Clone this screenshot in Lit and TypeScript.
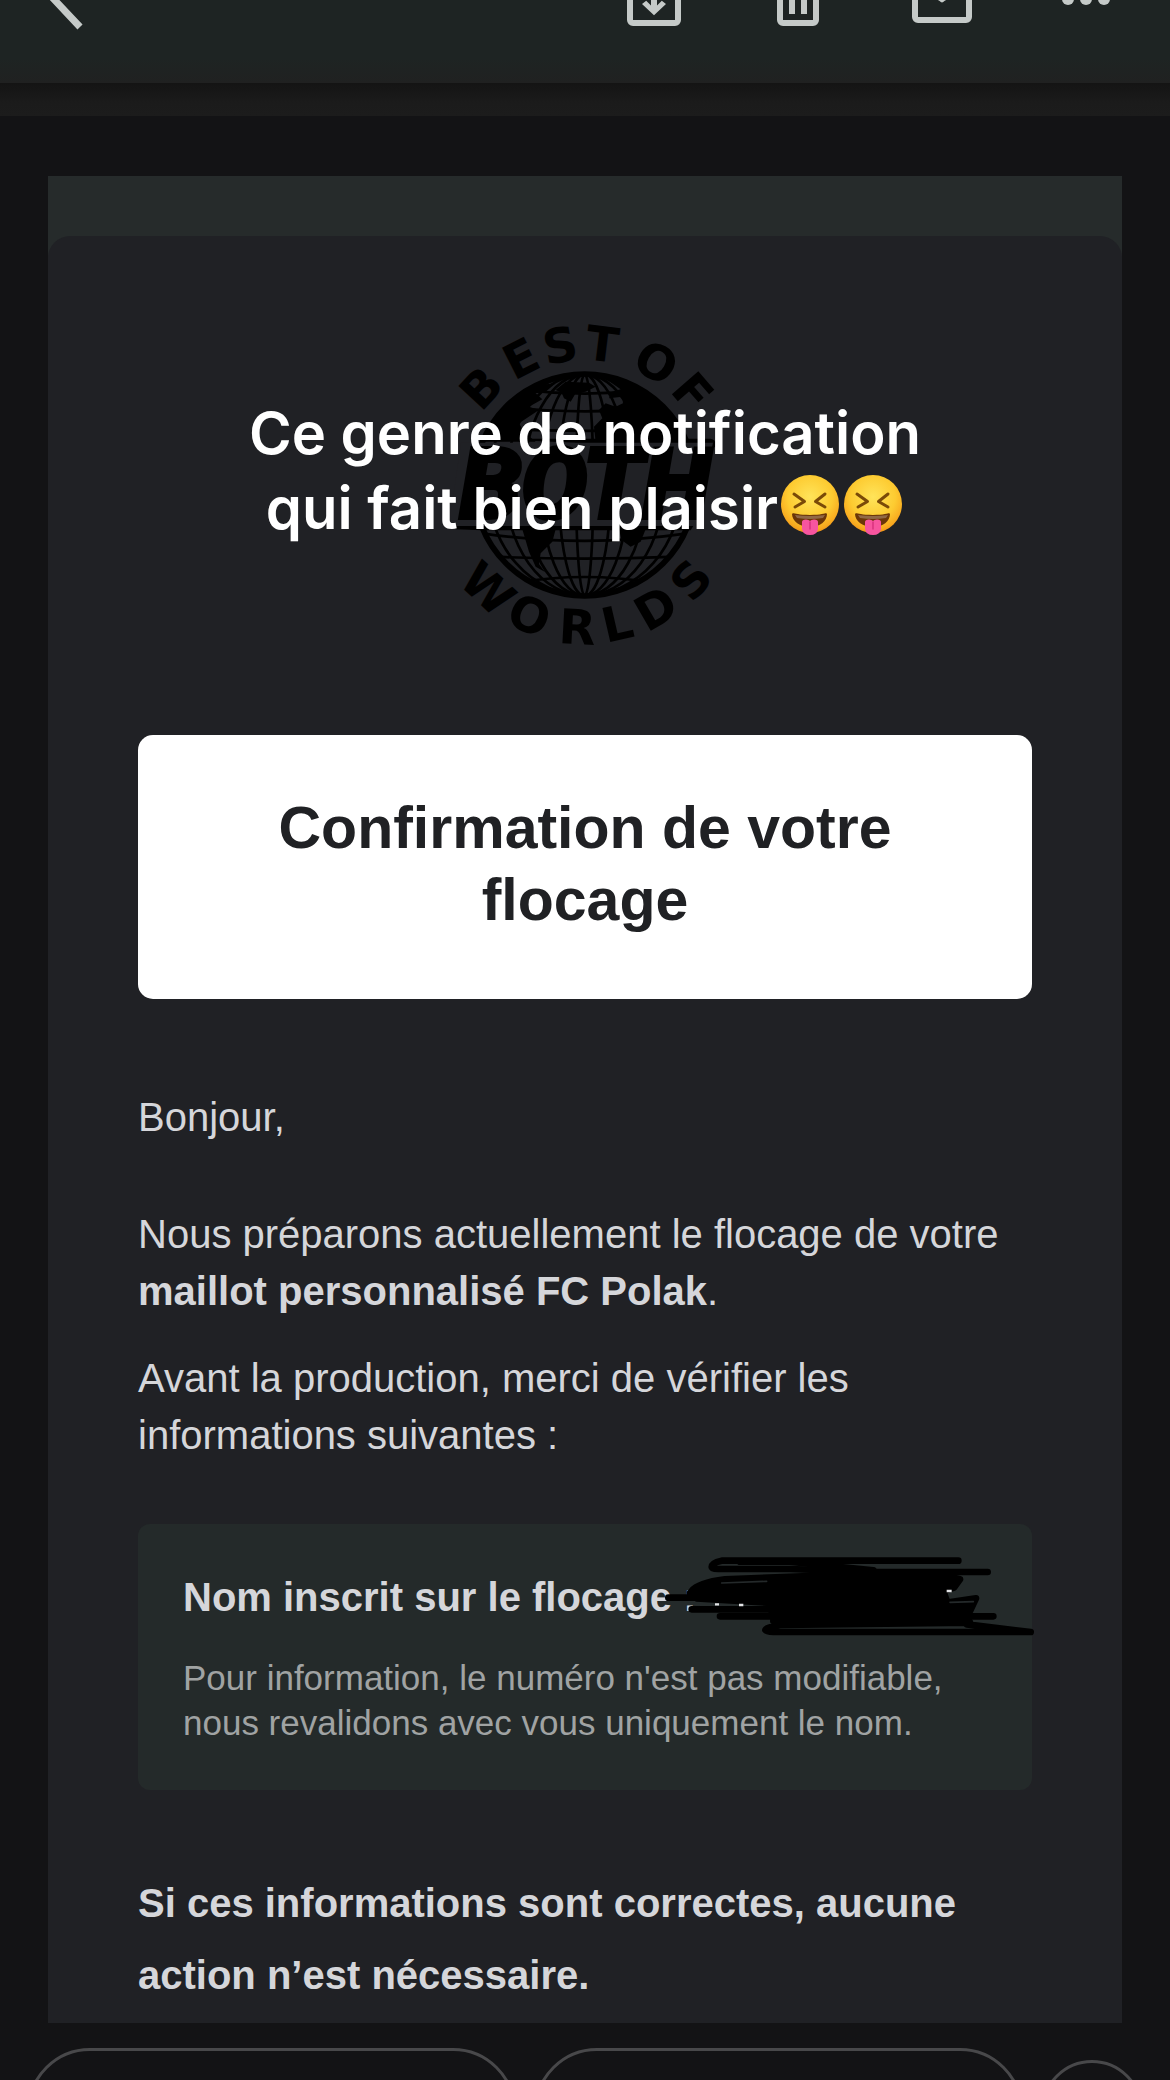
import { LitElement, html, css, svg } from 'lit';
import { customElement } from 'lit/decorators.js';

// [angle from vertical in degrees, half of the letter's advance in em]
type Letter = [number, number];

const BEST: Letter[] = [[-47, 0.38], [-27, 0.34], [-10, 0.36], [7, 0.34]];
const OF: Letter[] = [[30, 0.42], [49, 0.34]];
const WORLDS: Letter[] = [[-43, 0.55], [-23, 0.42], [-3, 0.38], [13, 0.32], [30, 0.42], [48, 0.36]];

const ARC_SIZE = 48;

function arcWord(word: string, letters: Letter[], radius: number, bottom = false) {
  const xs: number[] = [];
  const ys: number[] = [];
  const rotations: number[] = [];
  for (const [deg, half] of letters) {
    const a = (deg * Math.PI) / 180;
    const back = half * ARC_SIZE;
    const dir = bottom ? -1 : 1;
    xs.push(Math.round(Math.sin(a) * radius - Math.cos(a) * back));
    ys.push(Math.round(-dir * Math.cos(a) * radius - dir * Math.sin(a) * back));
    rotations.push(deg * dir);
  }
  return svg`<text class="arc" x=${xs.join(' ')} y=${ys.join(' ')} rotate=${rotations.join(' ')}>${word}</text>`;
}

@customElement('both-logo')
export class BothLogo extends LitElement {
  static styles = css`
    :host {
      display: block;
      width: 300px;
      height: 330px;
    }

    svg {
      display: block;
      overflow: visible;
    }

    .arc {
      font: bold 48px "DejaVu Sans", sans-serif;
    }

    .banner {
      font: italic 900 98px Roboto, "Liberation Sans", sans-serif;
      stroke: #000;
      stroke-width: 4px;
    }
  `;

  render() {
    return html`
      <svg viewBox="-150 -165 300 330" width="300" height="330" role="img" aria-label="Both, best of worlds">
        ${arcWord('BEST', BEST, 125)}
        ${arcWord('OF', OF, 125)}
        ${arcWord('WORLDS', WORLDS, 159, true)}
        <g transform="translate(-146 -125) scale(0.3333)">
          <clipPath id="globe"><circle cx="437" cy="375" r="338"/></clipPath>
          <g clip-path="url(#globe)">
            <g fill="none" stroke="#000" stroke-width="8">
              <ellipse cx="437" cy="375" rx="26" ry="332"/>
              <ellipse cx="437" cy="375" rx="78" ry="332"/>
              <ellipse cx="437" cy="375" rx="131" ry="332"/>
              <ellipse cx="437" cy="375" rx="184" ry="332"/>
              <ellipse cx="437" cy="375" rx="238" ry="332"/>
              <ellipse cx="437" cy="375" rx="291" ry="332"/>
              <path d="M130 520Q437 565 745 520M160 590Q437 602 715 590M230 668Q437 634 645 668M250 90Q437 112 625 90M190 140Q437 168 690 140M130 205Q437 220 745 205"/>
            </g>
            <path d="M90 245L130 180L240 105L300 75L350 70L320 95L290 100L310 118L270 140L300 150L240 190L255 215L290 245Z"/>
            <path d="M350 90L380 65L450 68L470 80L440 95L410 100L395 125L375 115L368 98Z"/>
            <path d="M505 60L560 50L650 80L740 170L790 245L470 245L465 200L490 175L480 150L500 130L530 140L552 130L550 110L510 115L520 95L545 88Z"/>
            <path d="M250 508H350L340 545L305 580L300 612L318 636L290 620L270 575Z"/>
            <path d="M540 508H620L605 545L575 560L548 540Z"/>
          </g>
          <circle cx="437" cy="375" r="333" fill="none" stroke="#000" stroke-width="17"/>
          <path d="M130 236H815Q835 240 828 262H700ZM45 495H765L755 511H130L50 508Z"/>
          <path fill="#202125" d="M66 248H822L770 498H30Z"/>
        </g>
        <text class="banner" x="-125" y="33">BOTH</text>
      </svg>
    `;
  }
}

@customElement('tongue-face')
export class TongueFace extends LitElement {
  static styles = css`
    :host {
      display: inline-block;
      width: 63px;
      height: 60px;
      vertical-align: -6px;
    }

    svg {
      display: block;
      margin: 0 auto;
    }
  `;

  render() {
    return html`
      <svg viewBox="0 0 60 60" width="60" height="60" role="img" aria-label="😝">
        <defs>
          <radialGradient id="skin" cx="0.5" cy="0.38" r="0.64">
            <stop offset="0" stop-color="#ffe45a"/>
            <stop offset="0.6" stop-color="#fdcb31"/>
            <stop offset="0.88" stop-color="#f8a91f"/>
            <stop offset="1" stop-color="#ee8d16"/>
          </radialGradient>
        </defs>
        <circle cx="30" cy="29" r="29" fill="url(#skin)"/>
        <path fill="none" stroke="#7a4a08" stroke-width="3" stroke-linecap="round" stroke-linejoin="round" d="M14 19L24.500 26.500L15 32M45 19L35.500 26.500L45 32"/>
        <path fill="#6b3608" d="M12 39C13 37 15 40 30 40S46 37 47 39C47 46 40 52 30 52S12 46 12 39Z"/>
        <path fill="#fff" d="M15 40Q30 42 45 40L43 43Q30 45 17 43Z" opacity="0.25"/>
        <path fill="#f7559f" d="M22 47Q22 44.500 26 44.500Q29 44.500 30 46Q31 44.500 34 44.500Q38 44.500 38 47V54Q37 60 30 60T22 54Z"/>
        <path stroke="#d9327e" stroke-width="1.500" stroke-linecap="round" d="M30 47V54"/>
      </svg>
    `;
  }
}

@customElement('app-root')
export class AppRoot extends LitElement {
  static styles = css`
    :host {
      display: flex;
      flex-direction: column;
      min-height: 100vh;
      background: #131315;
      color: #d5d6da;
      font-family: "Liberation Sans", Arial, sans-serif;
      font-size: 40px;
      line-height: 57px;
    }

    h1, h2, h3, p {
      margin: 0;
    }

    button {
      margin: 0;
      padding: 0;
      border: 0;
      background: none;
      color: inherit;
    }

    .toolbar {
      box-sizing: border-box;
      height: 83px;
      padding: 0 48px 48px 24px;
      display: flex;
      align-items: flex-end;
      gap: 72px;
      overflow: hidden;
      background: linear-gradient(#1e2423 70%, #202121);
      color: #c5cac8;
    }

    .toolbar button {
      flex: none;
      width: 72px;
      height: 72px;
    }

    .toolbar button:first-child {
      margin-right: auto;
    }

    .toolbar svg {
      display: block;
    }

    .shadow {
      height: 33px;
      background: linear-gradient(#141414, #1b1b1b 60%, #1c1c1c);
    }

    .mail {
      flex: 1;
      padding: 60px 48px 0;
    }

    .sheet {
      padding-top: 60px;
      background: #262b2b;
    }

    .card {
      padding: 84px 90px 12px;
      border-radius: 22px 22px 0 0;
      background: #202125;
    }

    .brand {
      position: relative;
      display: flex;
      justify-content: center;
      margin-bottom: 85px;
    }

    .caption {
      position: absolute;
      inset: 76px 0 auto;
      color: #fff;
      font: 600 58px/75px Inter, sans-serif;
      text-align: center;
      white-space: nowrap;
    }

    .banner {
      padding: 57px 90px 63px;
      border-radius: 15px;
      background: #fff;
      color: #202124;
      font-size: 59px;
      line-height: 72px;
      text-align: center;
      margin-bottom: 90px;
    }

    .hello {
      margin-bottom: 60px;
    }

    .intro {
      margin-bottom: 30px;
    }

    .info {
      position: relative;
      margin: 60px 0 77px;
      padding: 45px;
      border-radius: 12px;
      background: #242a2a;
    }

    .info h3 {
      font-size: 40px;
      margin-bottom: 29px;
    }

    .info p {
      color: #a0a3a3;
      font-size: 35px;
      line-height: 45px;
    }

    .scribble {
      position: absolute;
      top: 26px;
      right: -3px;
    }

    .closing {
      font-weight: bold;
      line-height: 72px;
    }

    .replies {
      box-sizing: border-box;
      height: 57px;
      padding: 25px 27px 0;
      overflow: hidden;
    }

    .row {
      display: flex;
      align-items: center;
      gap: 18px;
    }

    .row button {
      box-sizing: border-box;
      flex: 1;
      height: 126px;
      border: 3px solid #48484a;
      border-radius: 63px;
    }

    .row .round {
      flex: none;
      width: 102px;
      height: 102px;
    }
  `;

  render() {
    return html`
      <nav class="toolbar">
        <button aria-label="Retour">
          <svg viewBox="0 0 72 72" width="72" height="72" fill="none" stroke="currentColor" stroke-width="7">
            <path d="M56 -2L25 31L56 64"/>
          </svg>
        </button>
        <button aria-label="Archiver">
          <svg viewBox="0 0 24 24" width="72" height="72" fill="currentColor">
            <path fill-rule="evenodd" d="M5 3h14l2 3v13a2 2 0 0 1-2 2H5a2 2 0 0 1-2-2V6zM5 8v11h14V8z"/>
            <path d="M11 9.500h2v4.700l1.600-1.600L16 13.700l-4 3.700-4-3.700 1.400-1.100 1.600 1.600z"/>
          </svg>
        </button>
        <button aria-label="Supprimer">
          <svg viewBox="0 0 24 24" width="72" height="72" fill="currentColor">
            <path fill-rule="evenodd" d="M15 4V3H9v1H4v2h1v13a2 2 0 0 0 2 2h10a2 2 0 0 0 2-2V6h1V4zM7 6h10v13H7zM9 8h2v9H9zM13 8h2v9h-2z"/>
          </svg>
        </button>
        <button aria-label="Marquer comme non lu">
          <svg viewBox="0 0 24 24" width="72" height="72" fill="currentColor">
            <path fill-rule="evenodd" d="M4 4h16a2 2 0 0 1 2 2v12a2 2 0 0 1-2 2H4a2 2 0 0 1-2-2V6a2 2 0 0 1 2-2zM20 8l-7.200 4.700q-.8.900-1.600 0L4 8v10h16zM4 6l8 5 8-5z"/>
          </svg>
        </button>
        <button aria-label="Plus d'options">
          <svg viewBox="0 0 24 24" width="72" height="72" fill="currentColor">
            <circle cx="6" cy="12" r="2"/><circle cx="12" cy="12" r="2"/><circle cx="18" cy="12" r="2"/>
          </svg>
        </button>
      </nav>
      <div class="shadow"></div>

      <main class="mail">
        <div class="sheet">
          <article class="card">
            <div class="brand">
              <both-logo></both-logo>
              <h1 class="caption">Ce genre de notification<br>qui fait bien plaisir<tongue-face></tongue-face><tongue-face></tongue-face></h1>
            </div>

            <h2 class="banner">Confirmation de votre<br>flocage</h2>

            <p class="hello">Bonjour,</p>
            <p class="intro">Nous préparons actuellement le flocage de votre <b>maillot personnalisé FC Polak</b>.</p>
            <p>Avant la production, merci de vérifier les<br>informations suivantes :</p>

            <section class="info">
              <h3>Nom inscrit sur le flocage :</h3>
              <p>Pour information, le numéro n'est pas modifiable,<br>nous revalidons avec vous uniquement le nom.</p>
              <svg class="scribble" viewBox="60 117 1125 270" width="375" height="90" fill="none" stroke="#000" stroke-width="20" stroke-linecap="round" stroke-linejoin="round">
                <path d="M955 149H245Q215 155 215 168Q215 174 235 174H450L700 183H1043"/>
                <path d="M300 152H450L540 162L700 178"/>
                <path fill="#000" d="M155 240Q175 215 255 205L590 192L620 185L880 185L960 205L942 230L910 240L922 275L1008 262L990 300L940 300L400 310L380 275L170 262Z"/>
                <path d="M85 260H400M150 246H200M155 295H990M240 316H1060M400 330L990 335M990 335L420 342Q376 350 376 357Q380 363 400 363H1172M980 340L1172 363"/>
                <path stroke="#24292a" stroke-width="5" d="M245 216L380 211M930 274L1000 272"/>
                <path stroke="#e2e3e5" stroke-width="7" stroke-linecap="butt" d="M225 280H237M297 282H310M920 240H935"/>
              </svg>
            </section>

            <p class="closing">Si ces informations sont correctes, aucune<br>action n’est nécessaire.</p>
          </article>
        </div>
      </main>

      <footer class="replies">
        <div class="row">
          <button aria-label="Répondre"></button>
          <button aria-label="Transférer"></button>
          <button class="round" aria-label="Réagir"></button>
        </div>
      </footer>
    `;
  }
}
